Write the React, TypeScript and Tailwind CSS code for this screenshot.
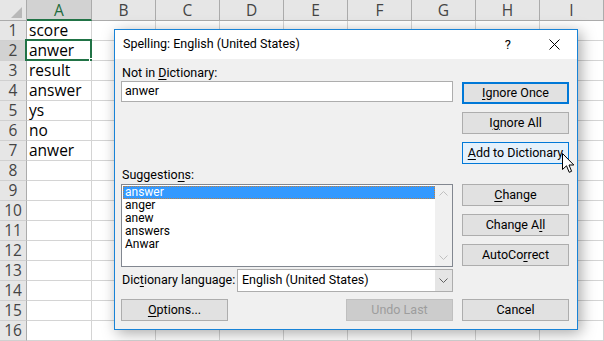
import type { ReactNode } from "react";

const cols = ["A", "B", "C", "D", "E", "F", "G", "H", "I"];
const cellData = ["score", "anwer", "result", "answer", "ys", "no", "anwer"];
const suggestions = ["answer", "anger", "anew", "answers", "Anwar"];

function U({ children }: { children: ReactNode }) {
	return <span className="underline underline-offset-2">{children}</span>;
}

function Btn({
	children,
	className = "",
}: {
	children: ReactNode;
	className?: string;
}) {
	return (
		<div
			className={`h-[22px] w-[107px] flex items-center justify-center border border-[#adadad] bg-[#e1e1e1] text-black ${className}`}
		>
			{children}
		</div>
	);
}

function Sheet() {
	return (
		<div
			className="grid grid-cols-[27px_65px_64px_64px_64px_64px_64px_64px_64px_1fr] grid-rows-[21px_repeat(16,20px)] text-[15.5px] text-black"
			style={{ fontFamily: '"Open Sans", sans-serif' }}
		>
			<div className="relative bg-[#e6e6e6] border-r border-b border-[#ababab]">
				<svg className="absolute left-[11px] top-[7px]" width="11" height="11" viewBox="0 0 11 11">
					<polygon points="11,0 11,11 0,11" fill="#b8b8b8" />
				</svg>
			</div>
			{cols.map((c) => (
				<div
					key={c}
					className={`flex items-center justify-center border-r ${
						c === "A"
							? "leading-[18px] bg-[#d2d2d2] text-[#1e6b3d] border-b-2 border-b-[#217346] border-r-[#ababab]"
							: "leading-[19px] bg-[#e6e6e6] text-[#444] border-b border-[#ababab]"
					}`}
				>
					{c}
				</div>
			))}
			{Array.from({ length: 16 }, (_, i) => (
				<Row key={i} n={i + 1} />
			))}
		</div>
	);
}

function Row({ n }: { n: number }) {
	return (
		<>
			<div
				className={`flex items-center justify-center leading-none text-[#444] border-r border-b border-r-[#ababab] border-b-[#d0d0d0] ${
					n === 2 ? "bg-[#d2d2d2]" : "bg-[#e6e6e6]"
				}`}
			>
				{n}
			</div>
			{cols.map((c) => (
				<div
					key={c}
					className="relative flex items-center pl-[2px] leading-none border-r border-b border-[#d4d4d4] bg-white"
				>
					{c === "A" && cellData[n - 1]}
					{c === "A" && n === 2 && (
						<>
							<div className="absolute left-[-2px] top-[-2px] right-[-1px] bottom-[-1px] border-2 border-[#217346]" />
							<div className="absolute right-[-4px] bottom-[-4px] w-[6px] h-[6px] bg-[#217346] border border-white" />
						</>
					)}
				</div>
			))}
		</>
	);
}

function Dialog() {
	return (
		<div
			className="absolute left-[114px] top-[29px] w-[464px] h-[301px] border border-[#1883d7] bg-[#f0f0f0] shadow-[3px_3px_14px_rgba(0,0,0,0.35)] text-[12.5px] text-black flex flex-col"
			style={{ fontFamily: 'Roboto, "Noto Sans", sans-serif' }}
		>
			<div className="h-[29px] bg-white flex items-center pl-[8px] pr-[17px]">
				<span className="flex-1">Spelling: English (United States)</span>
				<span className="text-[13px] mr-[38px]">?</span>
				<svg width="11" height="11" viewBox="0 0 11 11">
					<path d="M0.5 0.5 L10.5 10.5 M10.5 0.5 L0.5 10.5" stroke="#000" strokeWidth="1" />
				</svg>
			</div>
			<div className="flex flex-1 pl-[6px] gap-[9px]">
				<div className="w-[332px] flex flex-col">
					<div className="mt-[6px] h-[16px] leading-[16px] pl-[1px]">
						Not in <U>D</U>ictionary:
					</div>
					<div className="h-[21px] border border-[#adadad] bg-white flex items-center pl-[3px]">
						anwer
					</div>
					<div className="mt-[65px] h-[17px] leading-[16px] pl-[1px]">
						Suggestio<U>n</U>s:
					</div>
					<div className="h-[83px] border border-[#828790] bg-white flex">
						<div className="flex-1 pt-[1px] pl-[1px] text-[12px]">
							{suggestions.map((s, i) => (
								<div
									key={s}
									className={`h-[13px] leading-[13px] pl-[2px] ${
										i === 0
											? "bg-[#3399ff] text-white outline outline-1 outline-dotted outline-[#c08040] -outline-offset-1"
											: ""
									}`}
								>
									{s}
								</div>
							))}
						</div>
						<div className="w-[17px] bg-[#f0f0f0] flex flex-col items-center justify-between py-[6px]">
							<svg width="9" height="5" viewBox="0 0 9 5">
								<path d="M0.5 4.5 L4.5 0.5 L8.5 4.5" fill="none" stroke="#c0c0c0" />
							</svg>
							<svg width="9" height="5" viewBox="0 0 9 5">
								<path d="M0.5 0.5 L4.5 4.5 L8.5 0.5" fill="none" stroke="#c0c0c0" />
							</svg>
						</div>
					</div>
					<div className="mt-[2px] flex items-center">
						<div className="w-[116px] pl-[1px]">
							Dic<U>t</U>ionary language:
						</div>
						<div className="h-[23px] w-[216px] border border-[#adadad] bg-white flex">
							<div className="flex-1 flex items-center pl-[4px]">English (United States)</div>
							<div className="w-[17px] bg-[#e5e5e5] flex items-center justify-center">
								<svg width="9" height="5" viewBox="0 0 9 5">
									<path d="M0.5 0.5 L4.5 4.5 L8.5 0.5" fill="none" stroke="#606060" />
								</svg>
							</div>
						</div>
					</div>
					<div className="mt-[7px] flex justify-between">
						<Btn>
							<U>O</U>ptions...
						</Btn>
						<Btn className="!bg-[#cccccc] !border-[#bfbfbf] !text-[#9d9d9d]">Undo Last</Btn>
					</div>
				</div>
				<div className="w-[107px] flex flex-col">
					<Btn className="mt-[23px] !border-2 !border-[#0078d7]">
						<U>I</U>gnore Once
					</Btn>
					<Btn className="mt-[8px]">
						I<U>g</U>nore All
					</Btn>
					<Btn className="mt-[8px] !bg-[#e5f1fb] !border-[#0078d7]">
						<U>A</U>dd to Dictionary
					</Btn>
					<Btn className="mt-[20px]">
						<U>C</U>hange
					</Btn>
					<Btn className="mt-[8px]">
						Change A<U>l</U>l
					</Btn>
					<Btn className="mt-[8px]">
						AutoCo<U>r</U>rect
					</Btn>
					<Btn className="mt-[33px]">Cancel</Btn>
				</div>
			</div>
		</div>
	);
}

export default function App() {
	return (
		<div className="relative w-[604px] h-[341px] overflow-hidden bg-white">
			<Sheet />
			<Dialog />
			<svg
				className="absolute left-[562px] top-[153px]"
				width="13"
				height="21"
				viewBox="0 0 13 21"
			>
				<path
					d="M0.5 0.5 L0.5 16.5 L4.5 12.8 L7.2 19.3 L9.6 18.3 L7 12 L11.8 12 Z"
					fill="#fff"
					stroke="#000"
					strokeWidth="1"
				/>
			</svg>
		</div>
	);
}
